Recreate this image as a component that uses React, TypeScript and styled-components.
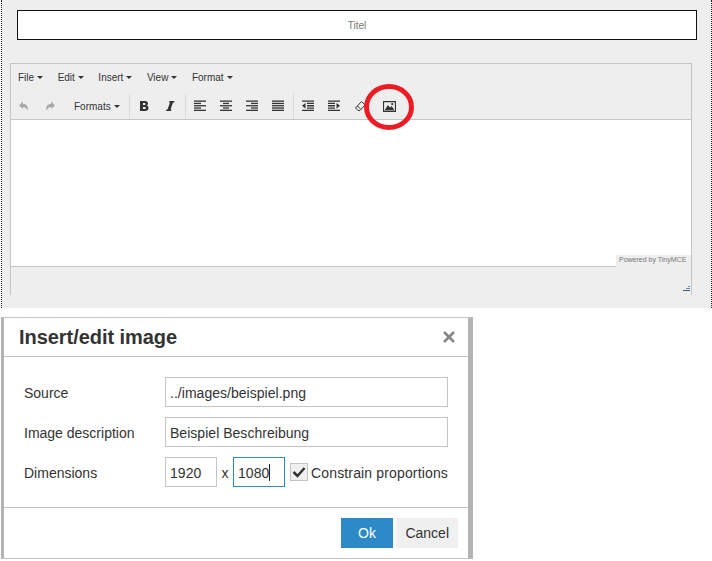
import styled, { createGlobalStyle } from "styled-components";
import { ReactNode } from "react";

const GlobalStyle = createGlobalStyle`
    html, body {
        margin: 0;
        padding: 0;
        background: #fff;
    }
    body {
        width: 712px;
        height: 561px;
        overflow: hidden;
        font-family: "Liberation Sans", Arial, sans-serif;
        color: #333;
    }
`;

const Screen = styled.div`
    padding-bottom: 2px;
`;

const EditorPage = styled.section`
    box-sizing: border-box;
    width: 711px;
    height: 308px;
    margin-left: 1px;
    padding: 10px 0 0 8px;
    background: #eee;
    border-left: 1px dotted #222;
    border-right: 1px dotted #222;
`;

const TitleBar = styled.div`
    box-sizing: border-box;
    width: 680px;
    height: 30px;
    margin-left: 7px;
    background: #fff;
    border: 1px solid #111;
    color: #777;
    font-size: 10px;
    line-height: 30px;
    text-align: center;
`;

const Editor = styled.div`
    box-sizing: border-box;
    width: 682px;
    height: 232px;
    margin-top: 23px;
    border: 1px solid #c5c5c5;
    border-bottom: 0;
    position: relative;
`;

const MenuBar = styled.div`
    display: flex;
    box-sizing: border-box;
    height: 30px;
    padding: 0 0 3px 7px;
    align-items: center;
    gap: 14.5px;
    font-size: 10px;
    color: #333;
`;

const MenuItem = styled.span`
    display: inline-flex;
    align-items: center;
    gap: 3px;
`;

const Caret = styled.i`
    display: inline-block;
    width: 0;
    height: 0;
    border-left: 3px solid transparent;
    border-right: 3px solid transparent;
    border-top: 3px solid #333;
`;

const Toolbar = styled.div`
    display: flex;
    height: 26px;
    align-items: center;
    box-sizing: border-box;
    border-bottom: 1px solid #c5c5c5;
`;

const ToolGroup = styled.div<{ $divider?: boolean; $inset?: number }>`
    display: flex;
    align-items: center;
    height: 25px;
    padding: 0 2px 0 ${(p) => p.$inset ?? 1}px;
    border-right: ${(p) => (p.$divider ? "1px solid #d9d9d9" : "0")};
    margin-top: -1px;
`;

const ToolButton = styled.span<{ $width?: number; $faded?: boolean }>`
    display: inline-flex;
    align-items: center;
    justify-content: center;
    width: ${(p) => p.$width ?? 26}px;
    height: 22px;
    color: ${(p) => (p.$faded ? "#a8a8a8" : "#333")};
`;

const FormatsButton = styled.span`
    display: inline-flex;
    align-items: center;
    gap: 3px;
    font-size: 10px;
    width: 49px;
    margin-left: 12px;
    margin-right: 4px;
`;

const Content = styled.div`
    height: 146px;
    background: #fff;
    border-bottom: 1px solid #c5c5c5;
`;

const Powered = styled.div`
    position: absolute;
    right: 0;
    top: 191px;
    box-sizing: border-box;
    width: 75px;
    height: 12px;
    padding-left: 3px;
    background: #eee;
    color: #777;
    font-size: 7px;
    line-height: 10px;
`;

const Grip = styled.svg`
    position: absolute;
    right: 0;
    bottom: 1px;
`;

const Highlight = styled.svg`
    position: absolute;
    left: 352px;
    top: 18px;
`;

const Dialog = styled.section`
    box-sizing: border-box;
    width: 472px;
    height: 242px;
    margin: 9px 0 0 1px;
    display: flex;
    flex-direction: column;
    background: #fff;
    border-left: 3px solid #b3b3b3;
    border-right: 5px solid #b3b3b3;
    border-top: 1px solid #c5c5c5;
    border-bottom: 1px solid #c5c5c5;
`;

const DialogHead = styled.header`
    display: flex;
    align-items: center;
    justify-content: space-between;
    height: 38px;
    padding: 0 12px 0 15px;
    border-bottom: 1px solid #c5c5c5;
    font-size: 20px;
    font-weight: bold;
    letter-spacing: -0.05px;
    color: #333;
`;

const DialogBody = styled.div`
    display: flex;
    flex-direction: column;
    gap: 10px;
    height: 151px;
    box-sizing: border-box;
    padding: 20px 0 0 20px;
    border-bottom: 1px solid #c5c5c5;
`;

const FormRow = styled.div`
    display: flex;
    align-items: center;
    height: 30px;
`;

const Label = styled.span`
    width: 141px;
    padding-top: 2px;
    font-size: 14px;
    color: #333;
`;

const Field = styled.div<{ $width?: number; $focused?: boolean }>`
    box-sizing: border-box;
    width: ${(p) => p.$width ?? 283}px;
    height: 30px;
    padding: 0 4px;
    border: 1px solid ${(p) => (p.$focused ? "#2d8ac7" : "#c5c5c5")};
    font-size: 14px;
    line-height: 30px;
    color: #333;
    white-space: nowrap;
    letter-spacing: 0.03px;
`;

const Cursor = styled.span`
    display: inline-block;
    width: 1px;
    height: 17px;
    background: #222;
    vertical-align: -3px;
`;

const Times = styled.span`
    width: 16px;
    padding-top: 2px;
    text-align: center;
    font-size: 14px;
`;

const CheckBox = styled.span`
    display: inline-flex;
    align-items: center;
    justify-content: center;
    box-sizing: border-box;
    width: 18px;
    height: 18px;
    margin: 0 3px 0 5px;
    background: #f0f0f0;
    border: 1px solid #c5c5c5;
`;

const CheckLabel = styled.span`
    padding-top: 2px;
    font-size: 14px;
    letter-spacing: 0.15px;
    white-space: nowrap;
`;

const DialogFoot = styled.footer`
    display: flex;
    justify-content: flex-end;
    gap: 3px;
    padding: 10px 10px 0 0;
`;

const Button = styled.span<{ $primary?: boolean }>`
    display: inline-block;
    height: 30px;
    line-height: 30px;
    padding: 0 ${(p) => (p.$primary ? 17.5 : 9)}px;
    font-size: 14px;
    text-align: center;
    background: ${(p) => (p.$primary ? "#2d8ac7" : "#f0f0f0")};
    color: ${(p) => (p.$primary ? "#fff" : "#333")};
`;

function Icon({ children, size = 12 }: { children: ReactNode; size?: number }) {
    return (
        <svg width={size} height={size} viewBox="0 0 12 12" fill="currentColor">
            {children}
        </svg>
    );
}

function Lines({ rows }: { rows: number[][] }) {
    return (
        <Icon>
            {rows.map(([x, w], i) => (
                <rect key={i} x={x} y={0.5 + i * 2.3} width={w} height={1.3} />
            ))}
        </Icon>
    );
}

const menus = ["File", "Edit", "Insert", "View", "Format"];

export default function App() {
    return (
        <Screen>
            <GlobalStyle />
            <EditorPage>
                <TitleBar>Titel</TitleBar>
                <Editor>
                    <MenuBar>
                        {menus.map((m) => (
                            <MenuItem key={m}>
                                {m} <Caret />
                            </MenuItem>
                        ))}
                    </MenuBar>
                    <Toolbar>
                        <ToolGroup $divider $inset={0}>
                            <ToolButton $faded>
                                <Icon>
                                    <path d="M5 1.500 1 5.500 5 9V7c2 0 3.500 1 4.500 3.500C10.500 6.500 8.500 4 5 4z" />
                                </Icon>
                            </ToolButton>
                            <ToolButton $faded $width={25}>
                                <Icon>
                                    <path d="M7 1.500l4 4L7 9V7c-2 0-3.500 1-4.500 3.500C1.500 6.500 3.500 4 7 4z" />
                                </Icon>
                            </ToolButton>
                            <FormatsButton>
                                Formats <Caret />
                            </FormatsButton>
                        </ToolGroup>
                        <ToolGroup $divider>
                            <ToolButton>
                                <Icon>
                                    <path
                                        fillRule="evenodd"
                                        d="M2 1h5c2 0 3 1 3 2.500 0 1-.6 1.800-1.400 2.100C9.700 5.900 10.500 6.800 10.500 8c0 2-1.500 3-3.500 3H2zm3 2v2h1.500c.6 0 1-.4 1-1s-.4-1-1-1zm0 4v2h1.700c.7 0 1.100-.4 1.100-1s-.4-1-1.100-1z"
                                    />
                                </Icon>
                            </ToolButton>
                            <ToolButton>
                                <Icon>
                                    <path d="M5.500 1h5l-.4 1.500H9L6.500 9.500h1L7 11H2l.4-1.500h1.100l2.500-7h-1z" />
                                </Icon>
                            </ToolButton>
                        </ToolGroup>
                        <ToolGroup $divider>
                            <ToolButton>
                                <Lines rows={[[0, 12], [0, 7], [0, 12], [0, 7], [0, 12]]} />
                            </ToolButton>
                            <ToolButton>
                                <Lines rows={[[0, 12], [3, 6], [0, 12], [3, 6], [0, 12]]} />
                            </ToolButton>
                            <ToolButton>
                                <Lines rows={[[0, 12], [5, 7], [0, 12], [5, 7], [0, 12]]} />
                            </ToolButton>
                            <ToolButton>
                                <Lines rows={[[0, 12], [0, 12], [0, 12], [0, 12], [0, 12]]} />
                            </ToolButton>
                        </ToolGroup>
                        <ToolGroup>
                            <ToolButton>
                                <Icon>
                                    <path d="M0 .5h12v1.300H0zM5 2.800h7v1.300H5zM5 5.100h7v1.300H5zM5 7.400h7v1.300H5zM0 9.700h12V11H0zM3.500 3v5.500L0 5.700z" />
                                </Icon>
                            </ToolButton>
                            <ToolButton>
                                <Icon>
                                    <path d="M0 .5h12v1.300H0zM0 2.800h7v1.300H0zM0 5.100h7v1.300H0zM0 7.400h7v1.300H0zM0 9.700h12V11H0zM8.500 3v5.500L12 5.700z" />
                                </Icon>
                            </ToolButton>
                            <ToolButton>
                                <svg width="12" height="12" viewBox="0 0 12 12" fill="none" stroke="currentColor">
                                    <path d="M7.500 1.500 11 5l-5 5.500H4L1.500 8zM3.500 6l3 3" />
                                </svg>
                            </ToolButton>
                            <ToolButton $width={33}>
                                <Icon size={13}>
                                    <path
                                        fillRule="evenodd"
                                        d="M0 1h12v10H0zm1 1v8h10V2zM1.500 9.500 4.500 4.500 6.500 7 8 5.500l2.500 4zM8.500 2.800a1 1 0 1 1 0 2 1 1 0 0 1 0-2z"
                                    />
                                </Icon>
                            </ToolButton>
                        </ToolGroup>
                    </Toolbar>
                    <Content />
                    <Powered>Powered by TinyMCE</Powered>
                    <Grip width="8" height="8" viewBox="0 0 8 8" fill="#555">
                        <rect x="5" y="0" width="2" height="1" fill="#4a90d9" />
                        <rect x="3" y="2" width="4" height="1" fill="#4a90d9" />
                        <rect x="0" y="4" width="7" height="1" />
                    </Grip>
                    <Highlight width="52" height="52" viewBox="0 0 52 52">
                        <ellipse cx="26" cy="25" rx="22.500" ry="20.500" fill="none" stroke="#ed1c24" strokeWidth="5" />
                    </Highlight>
                </Editor>
            </EditorPage>
            <Dialog>
                <DialogHead>
                    Insert/edit image
                    <svg width="14" height="14" viewBox="0 0 14 14">
                        <path d="M2 2l10 10M12 2 2 12" stroke="#858585" strokeWidth="2.500" />
                    </svg>
                </DialogHead>
                <DialogBody>
                    <FormRow>
                        <Label>Source</Label>
                        <Field>../images/beispiel.png</Field>
                    </FormRow>
                    <FormRow>
                        <Label>Image description</Label>
                        <Field>Beispiel Beschreibung</Field>
                    </FormRow>
                    <FormRow>
                        <Label>Dimensions</Label>
                        <Field $width={52}>1920</Field>
                        <Times>x</Times>
                        <Field $width={52} $focused>
                            1080
                            <Cursor />
                        </Field>
                        <CheckBox>
                            <svg width="14" height="12" viewBox="0 0 14 12">
                                <path d="M1.500 6l4 4 7-8" fill="none" stroke="#333" strokeWidth="2.500" />
                            </svg>
                        </CheckBox>
                        <CheckLabel>Constrain proportions</CheckLabel>
                    </FormRow>
                </DialogBody>
                <DialogFoot>
                    <Button $primary>Ok</Button>
                    <Button>Cancel</Button>
                </DialogFoot>
            </Dialog>
        </Screen>
    );
}
